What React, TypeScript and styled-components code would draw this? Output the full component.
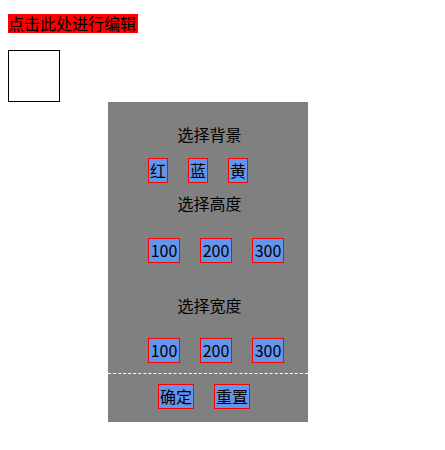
import React, { useState } from "react";
import styled, { createGlobalStyle } from "styled-components";

const GlobalStyle = createGlobalStyle`
  body {
    margin: 8px;
    font-family: "Noto Sans CJK SC", "Noto Sans", sans-serif;
    font-size: 16px;
    color: #000;
    background: #fff;
  }
`;

const EditTrigger = styled.div`
  width: fit-content;
  margin-top: 6px;
  padding-right: 2px;
  height: 19px;
  line-height: 19px;
  background: red;
  cursor: pointer;
`;

const Preview = styled.div<{ $bg: string; $w: number; $h: number }>`
  margin-top: 17px;
  width: ${(p) => p.$w}px;
  height: ${(p) => p.$h}px;
  border: 1px solid #000;
  background: ${(p) => p.$bg};
`;

const Panel = styled.div`
  margin-left: 100px;
  width: 200px;
  height: 320px;
  box-sizing: border-box;
  padding-top: 22px;
  background: gray;
  display: flex;
  flex-direction: column;
`;

const Label = styled.div<{ $gap: number }>`
  margin-top: ${(p) => p.$gap}px;
  padding-left: 3px;
  height: 22px;
  line-height: 21px;
  text-align: center;
`;

const OptionRow = styled.div<{ $gap: number; $indent: number }>`
  display: flex;
  gap: 20px;
  margin-top: ${(p) => p.$gap}px;
  padding-left: ${(p) => p.$indent}px;
`;

const Option = styled.span<{ $width?: number }>`
  display: inline-block;
  box-sizing: border-box;
  ${(p) => (p.$width ? `width: ${p.$width}px;` : "padding: 0 1px;")}
  height: 25px;
  line-height: 23px;
  text-align: center;
  border: 1px solid red;
  background: cornflowerblue;
  cursor: pointer;
`;

const Divider = styled.div`
  margin-top: 10px;
  border-top: 1px dashed #fff;
`;

const colors: [string, string][] = [
  ["红", "red"],
  ["蓝", "blue"],
  ["黄", "yellow"],
];
const sizes = [100, 200, 300];

export default function App() {
  const [bg, setBg] = useState("#fff");
  const [h, setH] = useState(50);
  const [w, setW] = useState(50);

  return (
    <>
      <GlobalStyle />
      <EditTrigger>点击此处进行编辑</EditTrigger>
      <Preview $bg={bg} $w={w} $h={h} />
      <Panel>
        <Label $gap={0}>选择背景</Label>
        <OptionRow $gap={12} $indent={40}>
          {colors.map(([name, value]) => (
            <Option key={name} onClick={() => setBg(value)}>
              {name}
            </Option>
          ))}
        </OptionRow>
        <Label $gap={10}>选择高度</Label>
        <OptionRow $gap={23} $indent={40}>
          {sizes.map((s) => (
            <Option key={s} $width={32} onClick={() => setH(s)}>
              {s}
            </Option>
          ))}
        </OptionRow>
        <Label $gap={32}>选择宽度</Label>
        <OptionRow $gap={21} $indent={40}>
          {sizes.map((s) => (
            <Option key={s} $width={32} onClick={() => setW(s)}>
              {s}
            </Option>
          ))}
        </OptionRow>
        <Divider />
        <OptionRow $gap={10} $indent={50}>
          <Option>确定</Option>
          <Option
            onClick={() => {
              setBg("#fff");
              setH(50);
              setW(50);
            }}
          >
            重置
          </Option>
        </OptionRow>
      </Panel>
    </>
  );
}
